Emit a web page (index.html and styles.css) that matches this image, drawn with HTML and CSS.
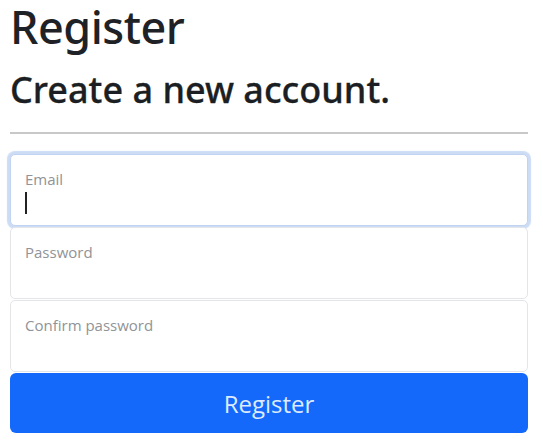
FILE: index.html
```html
<!DOCTYPE html>
<html lang="en">
<head>
<meta charset="utf-8">
<title>Register</title>
<link rel="stylesheet" href="styles.css">
</head>
<body>
<main class="page">
  <h1 class="title">Register</h1>
  <h2 class="subtitle">Create a new account.</h2>
  <hr class="rule">
  <form class="form">
    <div class="field field-focus">
      <label class="field-label">Email</label>
      <span class="caret"></span>
    </div>
    <div class="field">
      <label class="field-label">Password</label>
    </div>
    <div class="field">
      <label class="field-label">Confirm password</label>
    </div>
    <button type="button" class="btn-primary">Register</button>
  </form>
</main>
</body>
</html>
```

FILE: styles.css
```css
* { box-sizing: border-box; }
html, body { margin: 0; padding: 0; background: #fff; }
body {
  font-family: "Open Sans", "Noto Sans", sans-serif;
  color: #212529;
}
.page {
  padding: 0 15px 0 10px;
}
.title {
  margin: 0;
  font-family: "Noto Sans", "Open Sans", sans-serif;
  font-size: 45px;
  font-weight: 500;
  line-height: 1.2;
  letter-spacing: -0.5px;
  color: #1e2226;
}
.subtitle {
  margin: 14px 0 0;
  font-family: "Noto Sans", "Open Sans", sans-serif;
  font-size: 36px;
  font-weight: 500;
  line-height: 1.2;
  color: #1b1f23;
  -webkit-text-stroke: 0.3px #1b1f23;
}
.rule {
  margin: 21px 0 0;
  border: 0;
  height: 2px;
  background: #c8c8c8;
}
.form {
  margin-top: 20px;
  display: flex;
  flex-direction: column;
}
.field {
  position: relative;
  height: 72px;
  border: 1px solid #e3e5e8;
  border-radius: 5px;
  padding: 14px 14px 0;
  background: #fff;
}
.field + .field { margin-top: 1px; }
.field-focus {
  border-color: #c2d3f1;
  box-shadow: 0 0 1px 3px #cddcf5;
}
.field-label {
  display: block;
  font-size: 15px;
  color: #909397;
  line-height: 20px;
}
.caret {
  display: block;
  margin-top: 3px;
  width: 2px;
  height: 22px;
  background: #222;
}
.btn-primary {
  margin-top: 1px;
  height: 60px;
  border: 0;
  border-radius: 6px;
  background: #1469fb;
  color: #dcebff;
  font-family: inherit;
  font-size: 24px;
  font-weight: 500;
  width: 100%;
}
```
